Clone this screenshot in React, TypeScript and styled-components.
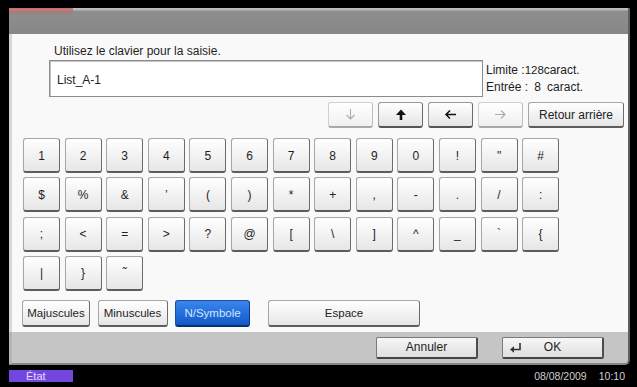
import React from 'react';
import styled, { createGlobalStyle } from 'styled-components';

const GlobalStyle = createGlobalStyle`
  html, body {
    margin: 0;
    padding: 0;
    background: #000;
  }
  body {
    font-family: 'Liberation Sans', Arial, sans-serif;
  }
`;

const Screen = styled.div`
  width: 637px;
  height: 387px;
  background: #000;
  display: flex;
  flex-direction: column;
  overflow: hidden;
`;

const Panel = styled.div`
  margin: 8px 7px 0 9px;
  height: 357px;
  display: flex;
  flex-direction: column;
`;

const TitleBar = styled.div`
  flex: none;
  height: 26px;
  background: linear-gradient(#c0c0c0 0, #b8b8b8 2px, #8e8e8e 3px, #878787 100%);
  border-right: 2px solid #5e5e5e;
`;

const Tab = styled.div`
  width: 64px;
  height: 7px;
  background: linear-gradient(rgba(207, 90, 90, 0.85), rgba(207, 90, 90, 0));
`;

const Content = styled.div`
  flex: 1;
  box-sizing: border-box;
  background: #f9f9f9;
  border-left: 3px solid #d6d6d6;
  border-right: 2px solid #5e5e5e;
  display: flex;
  flex-direction: column;
  padding-top: 10px;
`;

const Prompt = styled.div`
  margin-left: 42px;
  font-size: 12px;
  line-height: 14px;
  color: #1e1e1e;
`;

const InputRow = styled.div`
  display: flex;
  margin: 2px 0 0 37px;
  height: 37px;
`;

const TextBox = styled.div`
  box-sizing: border-box;
  width: 434px;
  height: 37px;
  background: #fff;
  border: 1px solid #8c8c8c;
  box-shadow: inset 1px 1px 0 #c4c4c4;
  display: flex;
  align-items: center;
  padding: 2px 0 0 7px;
  font-size: 12px;
  color: #1e1e1e;
`;

const Limits = styled.div`
  margin-left: 3px;
  display: flex;
  flex-direction: column;
  justify-content: center;
  gap: 3px;
  font-size: 12px;
  line-height: 14px;
  color: #1e1e1e;
`;

const LimitLine = styled.div`
  display: flex;
  align-items: baseline;
  white-space: pre;
`;

const LimitValue = styled.span<{ $small?: boolean }>`
  display: inline-block;
  width: 19px;
  text-align: center;
  font-size: ${(p) => (p.$small ? '11.5px' : '12px')};
`;

const ArrowRow = styled.div`
  display: flex;
  justify-content: flex-end;
  gap: 5px;
  margin-top: 5px;
  padding-right: 4px;
  height: 26px;
`;

const RaisedButton = styled.button`
  box-sizing: border-box;
  margin: 0;
  padding: 0;
  border: 1px solid #a6a6a6;
  border-right: 1px solid #6c6c6c;
  border-bottom: 2px solid #5c5c5c;
  border-radius: 3px;
  background: linear-gradient(#ffffff, #e6e6e6);
  font-family: 'Liberation Sans', Arial, sans-serif;
  color: #1e1e1e;
  display: flex;
  align-items: center;
  justify-content: center;
`;

const ArrowButton = styled(RaisedButton)<{ $disabled?: boolean }>`
  width: 45px;
  height: 26px;
  border-color: ${(p) => (p.$disabled ? '#cfcfcf' : '#9a9a9a')};
  border-right-color: ${(p) => (p.$disabled ? '#bdbdbd' : '#6a6a6a')};
  border-bottom-color: ${(p) => (p.$disabled ? '#a8a8a8' : '#555')};
  background: ${(p) =>
    p.$disabled ? 'linear-gradient(#ffffff, #f0f0f0)' : 'linear-gradient(#ffffff, #e4e4e4)'};
`;

const WideButton = styled(RaisedButton)`
  width: 96px;
  height: 26px;
  font-size: 12px;
`;

const KeyGrid = styled.div`
  display: grid;
  grid-template-columns: repeat(13, 37px);
  grid-auto-rows: 35px;
  column-gap: 4.6px;
  row-gap: 4.3px;
  margin: 10px 0 0 11px;
`;

const Key = styled(RaisedButton)`
  width: 37px;
  height: 35px;
  font-size: 12px;
  padding-top: 1px;
`;

const ModeRow = styled.div`
  display: flex;
  gap: 7.5px;
  margin: 9px 0 0 10px;
  height: 27px;
`;

const ModeButton = styled(RaisedButton)<{ $width: number; $active?: boolean; $spaced?: boolean }>`
  width: ${(p) => p.$width}px;
  height: 27px;
  font-size: 11.5px;
  margin-left: ${(p) => (p.$spaced ? '10.5px' : '0')};
  ${(p) =>
    p.$active &&
    `
    background: linear-gradient(#3a86ee, #1159c9);
    border-color: #1a4fa8;
    border-right-color: #0c3a86;
    border-bottom-color: #0a2f70;
    color: #d6e6ff;
  `}
`;

const Footer = styled.div`
  flex: none;
  box-sizing: border-box;
  height: 33px;
  background: #c5c5c5;
  border-left: 3px solid #b4b4b4;
  border-right: 2px solid #5e5e5e;
  border-bottom: 2px solid #858585;
  border-bottom-right-radius: 5px;
  display: flex;
  align-items: center;
  justify-content: flex-end;
  gap: 24px;
  padding-right: 24px;
`;

const ActionButton = styled.button`
  box-sizing: border-box;
  width: 102px;
  height: 22px;
  margin: 0;
  padding: 0 6px;
  border: 1px solid #7a7a7a;
  border-right: 2px solid #4c4c4c;
  border-bottom: 2px solid #444;
  border-radius: 2px;
  background: linear-gradient(#f7f7f7, #dedede);
  font-family: 'Liberation Sans', Arial, sans-serif;
  font-size: 12px;
  color: #1e1e1e;
  display: grid;
  grid-template-columns: 1fr auto 1fr;
  align-items: center;
`;

const ActionLabel = styled.span`
  grid-column: 2;
`;

const ActionIcon = styled.span`
  grid-column: 1;
  justify-self: start;
  display: flex;
`;

const StatusBar = styled.div`
  flex: 1;
  display: flex;
  align-items: center;
  padding: 0 12px 1px 9px;
  font-size: 10.5px;
  color: #cfcfcf;
`;

const StateBadge = styled.div`
  width: 64px;
  height: 12px;
  background: #7346df;
  color: #e4dcff;
  font-size: 11px;
  line-height: 12px;
  padding-left: 17px;
  box-sizing: border-box;
`;

const Clock = styled.div`
  margin-left: auto;
  display: flex;
  gap: 12px;
`;

type Dir = 'up' | 'down' | 'left' | 'right';

const Arrow = ({ dir, disabled }: { dir: Dir; disabled?: boolean }) => {
  const color = disabled ? '#ababab' : '#111';
  const rotate = { up: 0, right: 90, down: 180, left: 270 }[dir];
  if (!disabled && dir === 'up') {
    return (
      <svg width="12" height="13" viewBox="0 0 12 13">
        <path d="M6 1.5 L11 7 H7.3 V12 H4.7 V7 H1 Z" fill={color} />
      </svg>
    );
  }
  return (
    <svg width="13" height="13" viewBox="0 0 13 13" style={{ transform: `rotate(${rotate}deg)` }}>
      <path
        d="M6.5 12V2 M2.5 6 6.5 2l4 4"
        fill="none"
        stroke={color}
        strokeWidth={disabled ? 1.1 : 1.5}
      />
    </svg>
  );
};

const EnterIcon = () => (
  <svg width="13" height="11" viewBox="0 0 13 11">
    <path d="M11 1V7.5H4.5" fill="none" stroke="#333" strokeWidth="1.6" />
    <path d="M1 7.5 5 4.2V10.8Z" fill="#333" />
  </svg>
);

const rows: string[][] = [
  ['1', '2', '3', '4', '5', '6', '7', '8', '9', '0', '!', '"', '#'],
  ['$', '%', '&', '’', '(', ')', '*', '+', ',', '-', '.', '/', ':'],
  [';', '<', '=', '>', '?', '@', '[', '\\', ']', '^', '_', '`', '{'],
  ['|', '}', '˜'],
];

export default function App() {
  return (
    <Screen>
      <GlobalStyle />
      <Panel>
        <TitleBar>
          <Tab />
        </TitleBar>
        <Content>
          <Prompt>Utilisez le clavier pour la saisie.</Prompt>
          <InputRow>
            <TextBox>List_A-1</TextBox>
            <Limits>
              <LimitLine>
                Limite :<LimitValue $small>128</LimitValue>caract.
              </LimitLine>
              <LimitLine>
                Entrée :<LimitValue>8</LimitValue>caract.
              </LimitLine>
            </Limits>
          </InputRow>
          <ArrowRow>
            <ArrowButton $disabled>
              <Arrow dir="down" disabled />
            </ArrowButton>
            <ArrowButton>
              <Arrow dir="up" />
            </ArrowButton>
            <ArrowButton>
              <Arrow dir="left" />
            </ArrowButton>
            <ArrowButton $disabled>
              <Arrow dir="right" disabled />
            </ArrowButton>
            <WideButton>Retour arrière</WideButton>
          </ArrowRow>
          <KeyGrid>
            {rows.map((row, r) => row.map((k, i) => <Key key={`${r}-${i}`}>{k}</Key>))}
          </KeyGrid>
          <ModeRow>
            <ModeButton $width={68}>Majuscules</ModeButton>
            <ModeButton $width={70}>Minuscules</ModeButton>
            <ModeButton $width={75} $active>
              N/Symbole
            </ModeButton>
            <ModeButton $width={152} $spaced>
              Espace
            </ModeButton>
          </ModeRow>
        </Content>
        <Footer>
          <ActionButton>
            <ActionLabel>Annuler</ActionLabel>
          </ActionButton>
          <ActionButton>
            <ActionIcon>
              <EnterIcon />
            </ActionIcon>
            <ActionLabel>OK</ActionLabel>
          </ActionButton>
        </Footer>
      </Panel>
      <StatusBar>
        <StateBadge>État</StateBadge>
        <Clock>
          <span>08/08/2009</span>
          <span>10:10</span>
        </Clock>
      </StatusBar>
    </Screen>
  );
}
